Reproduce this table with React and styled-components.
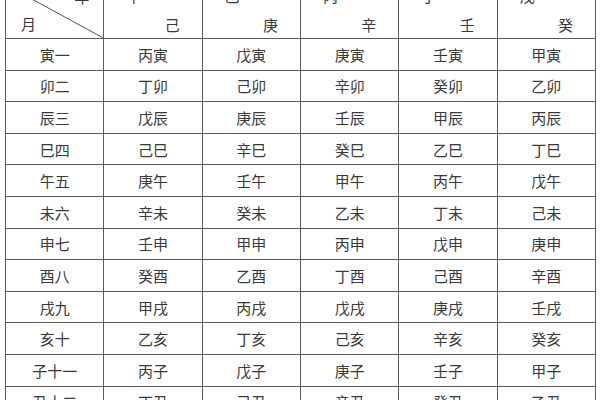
import React from "react";
import styled, { createGlobalStyle } from "styled-components";

const STEMS = "甲乙丙丁戊己庚辛壬癸";
const BRANCHES = "寅卯辰巳午未申酉戌亥子丑";
const NUMS = ["一", "二", "三", "四", "五", "六", "七", "八", "九", "十", "十一", "十二"];

// year stem pairs and the stem that starts month 寅 for each
const YEARS = [
    { top: "甲", bottom: "己", start: 2 },
    { top: "乙", bottom: "庚", start: 4 },
    { top: "丙", bottom: "辛", start: 6 },
    { top: "丁", bottom: "壬", start: 8 },
    { top: "戊", bottom: "癸", start: 0 },
];

const GlobalStyle = createGlobalStyle`
    html, body {
        margin: 0;
        padding: 0;
        background: #fff;
        overflow: hidden;
    }
    body {
        font-family: "Noto Sans CJK SC", "Noto Sans", sans-serif;
        color: #3a3a3a;
    }
`;

const Page = styled.div`
    width: 600px;
    height: 400px;
    overflow: hidden;
    padding-left: 5px;
    box-sizing: border-box;
`;

const Table = styled.table`
    border-collapse: collapse;
    table-layout: fixed;
    width: 591px;
    margin-top: -16px;
    font-size: 15px;
    line-height: 1;

    td, th {
        border: 1px solid #5c5c5c;
        padding: 0;
        font-weight: 400;
    }
`;

const HeadCell = styled.th`
    height: 53px;
    position: relative;
    vertical-align: top;
`;

const HeadStack = styled.div`
    height: 53px;
    box-sizing: border-box;
    padding: 3px 22px 6px 22px;
    display: flex;
    flex-direction: column;
    justify-content: space-between;
    span:first-child { align-self: flex-start; }
    span:last-child { align-self: flex-end; }
`;

const CornerStack = styled(HeadStack)`
    padding: 4px 14px 7px 15px;
    span:first-child { align-self: flex-end; }
    span:last-child { align-self: flex-start; }
`;

const Diagonal = styled.svg`
    position: absolute;
    inset: 0;
    width: 100%;
    height: 100%;
    pointer-events: none;
`;

const Row = styled.tr`
    height: 31.6px;
`;

const Cell = styled.td`
    text-align: center;
    vertical-align: middle;
`;

export default function App() {
    return (
        <>
            <GlobalStyle />
            <Page>
                <Table>
                    <thead>
                        <tr>
                            <HeadCell>
                                <Diagonal viewBox="0 0 100 100" preserveAspectRatio="none">
                                    <line x1="0" y1="0" x2="100" y2="100" stroke="#555" strokeWidth="1" vectorEffect="non-scaling-stroke" />
                                </Diagonal>
                                <CornerStack>
                                    <span>年</span>
                                    <span>月</span>
                                </CornerStack>
                            </HeadCell>
                            {YEARS.map((y) => (
                                <HeadCell key={y.top}>
                                    <HeadStack>
                                        <span>{y.top}</span>
                                        <span>{y.bottom}</span>
                                    </HeadStack>
                                </HeadCell>
                            ))}
                        </tr>
                    </thead>
                    <tbody>
                        {NUMS.map((n, i) => (
                            <Row key={n}>
                                <Cell>{BRANCHES[i] + n}</Cell>
                                {YEARS.map((y) => (
                                    <Cell key={y.top}>{STEMS[(y.start + i) % 10] + BRANCHES[i]}</Cell>
                                ))}
                            </Row>
                        ))}
                    </tbody>
                </Table>
            </Page>
        </>
    );
}
